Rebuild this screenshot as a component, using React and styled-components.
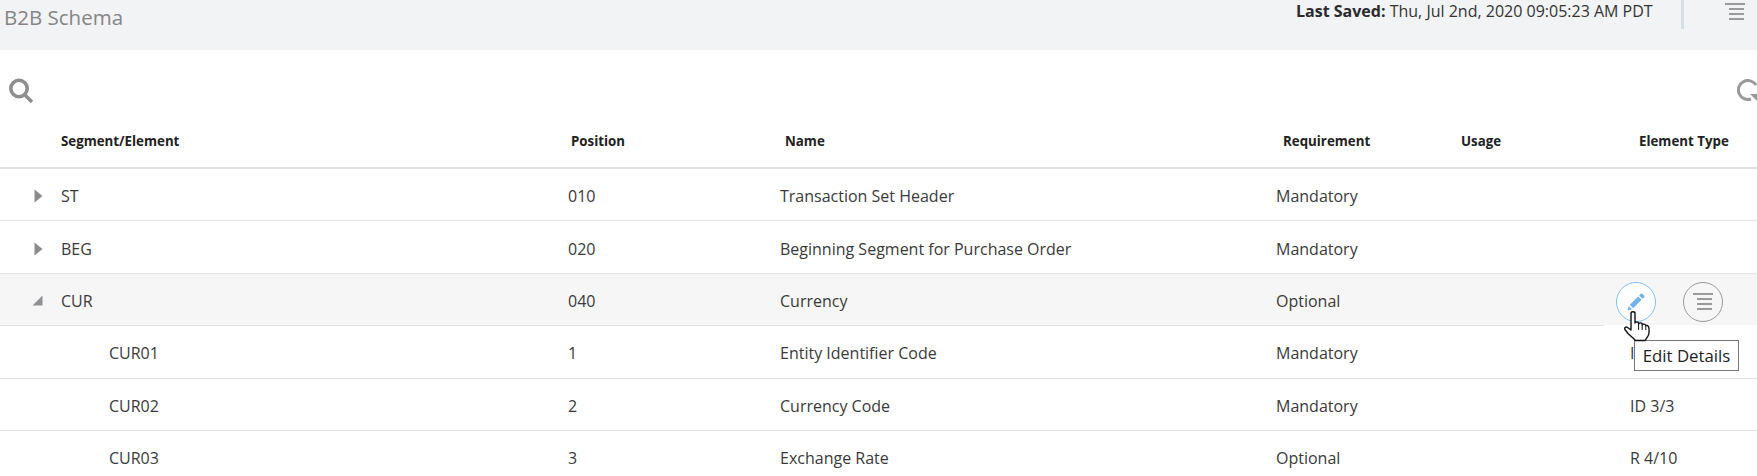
import styled, { createGlobalStyle } from 'styled-components';

const GlobalStyle = createGlobalStyle`
  html, body {
    margin: 0;
    padding: 0;
    height: 476px;
    overflow: hidden;
    background: #fff;
    font-family: "Open Sans", "Noto Sans", sans-serif;
    color: #333;
  }
`;

const Page = styled.div`
  width: 100%;
  height: 476px;
  overflow: hidden;
`;

const TopBar = styled.header`
  display: flex;
  justify-content: space-between;
  height: 50px;
  background: #f2f3f5;
  box-sizing: border-box;
  padding: 0 12px 0 4px;
`;

const PageTitle = styled.h1`
  margin: 2px 0 0;
  font-size: 20.5px;
  line-height: 30px;
  font-weight: 400;
  color: #858585;
`;

const TopRight = styled.div`
  display: flex;
  align-items: flex-start;
`;

const SavedText = styled.div`
  margin: 1px 0 0;
  font-size: 16px;
  line-height: 20px;
  color: #333;
  width: 385px;

  b {
    font-weight: 700;
    color: #2b2b2b;
  }
`;

const Divider = styled.div`
  width: 3px;
  height: 29px;
  background: #d6dfe8;
  margin-right: 41px;
`;

const MenuButton = styled.div`
  display: flex;
  margin-top: 3px;
`;

const Toolbar = styled.div`
  display: flex;
  justify-content: space-between;
  align-items: center;
  height: 82px;
  padding: 0 0 0 8px;
  overflow: hidden;
`;

const ColumnHeader = styled.div`
  display: grid;
  grid-template-columns: 571px 214px 498px 178px 178px 1fr;
  align-items: center;
  height: 35px;
  border-bottom: 2px solid #e0e0e0;
  font-size: 13.3px;
  font-weight: 700;
  color: #222;
`;

const HeaderCell = styled.div`
  padding-left: ${(p) => p.$indent || 0}px;
  margin-top: -17px;
`;

const Row = styled.div`
  position: relative;
  display: grid;
  grid-template-columns: 568px 212px 496px 354px 1fr;
  align-items: center;
  height: 52.4px;
  box-sizing: border-box;
  padding-top: 3px;
  border-bottom: 1px solid #e2e2e2;
  background: ${(p) => (p.$active ? '#f6f6f6' : '#fff')};
  font-size: 16px;
  color: #3a3a3a;

  ${(p) =>
    p.$active &&
    `&::after {
      content: '';
      position: absolute;
      left: 1604px;
      right: 0;
      bottom: -1px;
      height: 1px;
      background: #fff;
    }`}
`;

const SegmentCell = styled.div`
  display: flex;
  align-items: center;
  padding-left: ${(p) => (p.$child ? 109 : 34)}px;
`;

const Expander = styled.span`
  display: flex;
  width: 27px;
`;

const OpenCaret = styled.svg`
  margin-left: -2px;
`;

const Actions = styled.div`
  position: absolute;
  z-index: 2;
  top: 8px;
  left: 1616px;
  display: flex;
  gap: 27px;
`;

const RoundButton = styled.div`
  position: relative;
  display: flex;
  align-items: center;
  justify-content: center;
  width: 40px;
  height: 40px;
  box-sizing: border-box;
  border-radius: 50%;
  border: 1px solid ${(p) => (p.$hover ? '#84c1f2' : '#9a9a9a')};
  background: ${(p) => (p.$hover ? '#fff' : 'transparent')};
`;

const Tooltip = styled.div`
  position: absolute;
  left: 17px;
  top: 57px;
  width: 105px;
  height: 31px;
  box-sizing: border-box;
  border: 1px solid #767676;
  background: #fff;
  font-size: 16.8px;
  line-height: 29px;
  color: #222;
  text-align: center;
  white-space: nowrap;
`;

const Cursor = styled.svg`
  position: absolute;
  left: 7px;
  top: 27px;
  z-index: 3;
`;

const rows = [
  { seg: 'ST', pos: '010', name: 'Transaction Set Header', req: 'Mandatory', open: false },
  { seg: 'BEG', pos: '020', name: 'Beginning Segment for Purchase Order', req: 'Mandatory', open: false },
  { seg: 'CUR', pos: '040', name: 'Currency', req: 'Optional', open: true, active: true },
  { seg: 'CUR01', pos: '1', name: 'Entity Identifier Code', req: 'Mandatory', type: 'ID 2/3', child: true },
  { seg: 'CUR02', pos: '2', name: 'Currency Code', req: 'Mandatory', type: 'ID 3/3', child: true },
  { seg: 'CUR03', pos: '3', name: 'Exchange Rate', req: 'Optional', type: 'R 4/10', child: true },
];

const columns = [
  ['Segment/Element', 61],
  ['Position', 0],
  ['Name', 0],
  ['Requirement', 0],
  ['Usage', 0],
  ['Element Type', 0],
];

function MenuIcon() {
  return (
    <svg width="20" height="18" viewBox="0 0 20 18" fill="#9a9a9a">
      <rect x="0" y="0" width="20" height="2" />
      <rect x="4" y="5" width="15" height="2" />
      <rect x="4" y="10" width="15" height="2" />
      <rect x="4" y="15" width="15" height="2" />
    </svg>
  );
}

function SearchIcon() {
  return (
    <svg width="26" height="26" viewBox="0 0 26 26" fill="none" stroke="#8e8e8e">
      <circle cx="11" cy="10.5" r="8.2" strokeWidth="3.6" />
      <path d="M17 17l7 7" strokeWidth="3.6" />
    </svg>
  );
}

function RefreshIcon() {
  return (
    <svg width="20" height="24" viewBox="0 0 20 24" fill="none">
      <path d="M14 20A9.5 9.5 0 1 1 19 6" stroke="#999" strokeWidth="3" />
      <path d="M20 15h-7l7 7z" fill="#999" />
    </svg>
  );
}

function CaretRight() {
  return (
    <svg width="9" height="14" viewBox="0 0 9 14" fill="#8b8b8b">
      <path d="M0.5 0.5L8.5 7 0.5 13.5z" />
    </svg>
  );
}

function CaretOpen() {
  return (
    <OpenCaret width="11" height="11" viewBox="0 0 11 11" fill="#8f9194">
      <path d="M10.5 0.5V10.5H0.5z" />
    </OpenCaret>
  );
}

function PencilIcon() {
  return (
    <svg width="18" height="18" viewBox="0 0 18 18" fill="#6fb2ec">
      <path d="M0.5 17.5l1.2-4.6 3.4 3.4z" />
      <path d="M2.8 11.8l8.4-8.4 3.4 3.4-8.4 8.4z" />
      <path d="M12.2 2.4l1.6-1.6c.4-.4 1-.4 1.4 0l2 2c.4.4.4 1 0 1.4l-1.6 1.6z" />
    </svg>
  );
}

function HandCursor() {
  return (
    <Cursor width="27" height="33" viewBox="0 0 27 33">
      <path
        d="M7 20V3.5C7 1.2 11 1.2 11 3.5V13c0-1.5 3.6-1.5 3.6 0v1c0-1.5 3.6-1.5 3.6 0v1c0-1.5 3.6-1 3.6 .5 0 0 1.6-.5 2.6 1 .8 1.5 .6 6 .4 7.5-.4 2.5-2.5 4-3.5 6.5H11.5C9.5 28 6 25.5 4 23.5L1 19.5c-1-1.5 .8-3.2 2.2-2.2z"
        fill="#fff"
        stroke="#111"
        strokeWidth="1.4"
        strokeLinejoin="round"
      />
      <path d="M14.6 14v6M18.2 15v5M21.8 15.5V20" stroke="#111" strokeWidth="1" fill="none" />
    </Cursor>
  );
}

export default function App() {
  return (
    <Page>
      <GlobalStyle />
      <TopBar>
        <PageTitle>B2B Schema</PageTitle>
        <TopRight>
          <SavedText>
            <b>Last Saved:</b> Thu, Jul 2nd, 2020 09:05:23 AM PDT
          </SavedText>
          <Divider />
          <MenuButton>
            <MenuIcon />
          </MenuButton>
        </TopRight>
      </TopBar>
      <Toolbar>
        <SearchIcon />
        <RefreshIcon />
      </Toolbar>
      <ColumnHeader>
        {columns.map(([label, indent]) => (
          <HeaderCell key={label} $indent={indent}>
            {label}
          </HeaderCell>
        ))}
      </ColumnHeader>
      {rows.map((r) => (
        <Row key={r.seg} $active={r.active}>
          <SegmentCell $child={r.child}>
            {!r.child && <Expander>{r.open ? <CaretOpen /> : <CaretRight />}</Expander>}
            {r.seg}
          </SegmentCell>
          <div>{r.pos}</div>
          <div>{r.name}</div>
          <div>{r.req}</div>
          <div>{r.type}</div>
          {r.active && (
            <Actions>
              <RoundButton $hover>
                <PencilIcon />
                <Tooltip>Edit Details</Tooltip>
                <HandCursor />
              </RoundButton>
              <RoundButton>
                <MenuIcon />
              </RoundButton>
            </Actions>
          )}
        </Row>
      ))}
    </Page>
  );
}
